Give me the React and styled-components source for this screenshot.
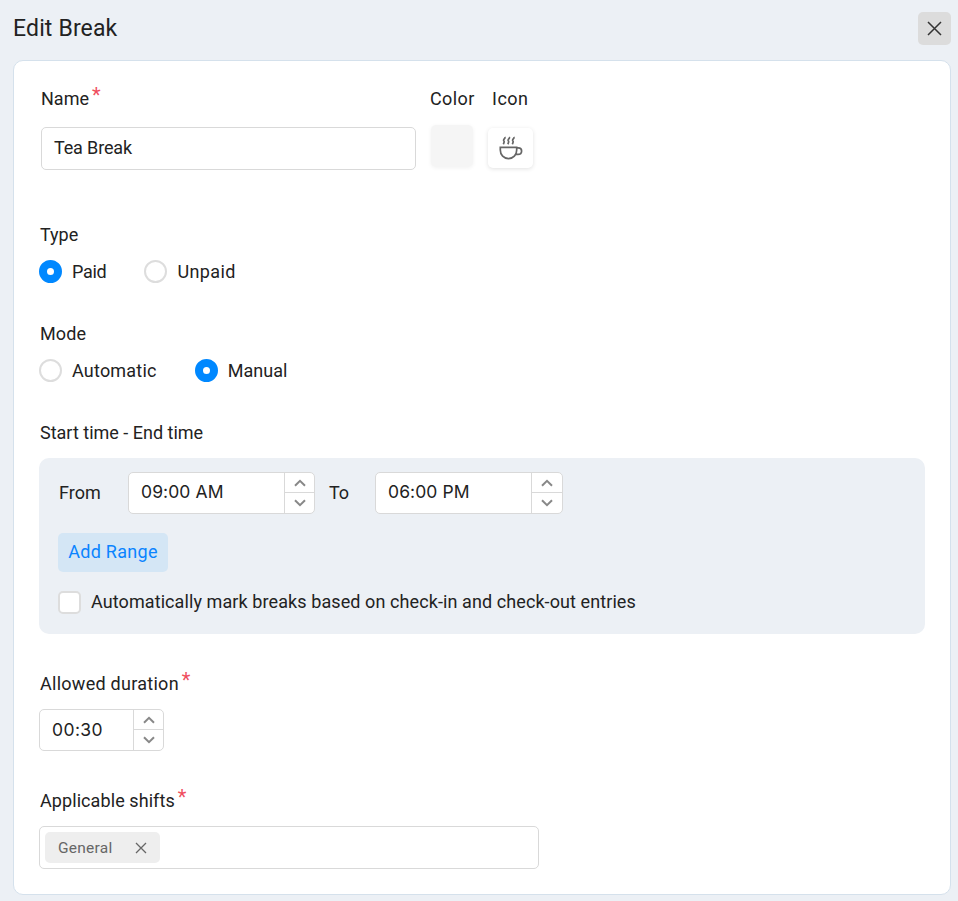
import React from "react";
import styled, { createGlobalStyle } from "styled-components";

const Spinner = ({ value, width, stepWidth = 30, track, top = 7 }) => (
  <SpinnerBox $width={width}>
    <SpinnerValue $track={track} $top={top}>
      {value}
    </SpinnerValue>
    <Steps $width={stepWidth}>
      <Step>
        <Chevron viewBox="0 0 12 8">
          <path d="M1 6.8 6 1.8 11 6.8" />
        </Chevron>
      </Step>
      <Step>
        <Chevron viewBox="0 0 12 8">
          <path d="M1 1.2 6 6.2 11 1.2" />
        </Chevron>
      </Step>
    </Steps>
  </SpinnerBox>
);

const Option = ({ label, checked, track }) => (
  <OptionLabel>
    <Radio $checked={checked} />
    <Text $track={track}>{label}</Text>
  </OptionLabel>
);

const App = () => {
  return (
    <>
      <GlobalStyle />
      <Page>
        <Header>
          <Title>Edit Break</Title>
          <CloseButton aria-label="Close">
            <svg width="15" height="15" viewBox="0 0 15 15">
              <path d="M1 1 14 14M14 1 1 14" />
            </svg>
          </CloseButton>
        </Header>
        <Panel>
          <TopRow>
            <NameField>
              <Label>
                <Text>Name</Text>
                <Required>*</Required>
              </Label>
              <TextBox>Tea Break</TextBox>
            </NameField>
            <ColorField>
              <Label>
                <Text $track={0.4}>Color</Text>
              </Label>
              <Swatch />
            </ColorField>
            <IconField>
              <Label $indent={4}>
                <Text $track={0.5}>Icon</Text>
              </Label>
              <IconTile>
                <svg width="26" height="26" viewBox="0 0 26 26">
                  <path d="M2.3 12.3H18.7V15C18.7 20 15.2 23.6 10.5 23.6S2.3 20 2.3 15Z" />
                  <path d="M18.7 12.9H20.2C22.5 12.9 23.6 14.3 23.6 16S22.4 19.4 20 19.4H17.5" />
                  <path d="M6.7 2C7.8 3.5 5 4.2 5.7 5.5 6.7 6.8 6.2 7.8 5.3 9.2M11.2 2C12.3 3.5 9.5 4.2 10.2 5.5 11.2 6.8 10.7 7.8 9.8 9.2M15.7 2C16.8 3.5 14 4.2 14.7 5.5 15.7 6.8 15.2 7.8 14.3 9.2" />
                </svg>
              </IconTile>
            </IconField>
          </TopRow>

          <Field $top={53}>
            <Label $indent={1}>
              <Text>Type</Text>
            </Label>
            <Options>
              <Option label="Paid" checked track={-0.3} />
              <Option label="Unpaid" track={0.4} />
            </Options>
          </Field>

          <Field $top={39}>
            <Label $indent={1}>
              <Text $track={0.1}>Mode</Text>
            </Label>
            <Options>
              <Option label="Automatic" track={0.2} />
              <Option label="Manual" checked track={0.05} />
            </Options>
          </Field>

          <Field $top={39}>
            <Label $indent={1}>
              <Text>Start time - End time</Text>
            </Label>
            <RangeBox>
              <RangeRow>
                <RangeText $width={70}>From</RangeText>
                <Spinner value="09:00 AM" width={187} track={0.1} />
                <RangeText $width={47} $left={13}>
                  To
                </RangeText>
                <Spinner
                  value="06:00 PM"
                  width={188}
                  stepWidth={31}
                  track={0.1}
                />
              </RangeRow>
              <AddButton>Add Range</AddButton>
              <CheckLabel>
                <Checkbox />
                <Text $track={0.09}>
                  Automatically mark breaks based on check-in and check-out
                  entries
                </Text>
              </CheckLabel>
            </RangeBox>
          </Field>

          <Field $top={38}>
            <Label $indent={1}>
              <Text $track={0.27}>Allowed duration</Text>
              <Required>*</Required>
            </Label>
            <Spinner value="00:30" width={125} track={0.4} top={8} />
          </Field>

          <Field $top={38}>
            <Label $indent={1}>
              <Text $track={0.08}>Applicable shifts</Text>
              <Required>*</Required>
            </Label>
            <SelectBox>
              <Chip>
                General
                <svg width="12" height="12" viewBox="0 0 12 12">
                  <path d="M1 1 11 11M11 1 1 11" />
                </svg>
              </Chip>
            </SelectBox>
          </Field>
        </Panel>
      </Page>
    </>
  );
};

const GlobalStyle = createGlobalStyle`
  * {
    box-sizing: border-box;
  }

  body {
    margin: 0;
    background-color: #ecf0f5;
    color: #222;
    font-family: Roboto, "Liberation Sans", sans-serif;
    font-size: 18px;
    line-height: 24px;
  }

  button {
    border: none;
    font: inherit;
    cursor: pointer;
  }
`;

const Page = styled.div`
  height: 901px;
  padding: 0 7px 6px 13px;
  overflow: hidden;
`;

const Header = styled.div`
  display: flex;
  justify-content: space-between;
  align-items: center;
  height: 60px;
  padding-bottom: 3px;
`;

const Title = styled.h1`
  margin: 0;
  font-size: 23px;
  font-weight: 400;
  line-height: 30px;
  letter-spacing: 0.15px;
`;

const CloseButton = styled.button`
  display: flex;
  justify-content: center;
  align-items: center;
  width: 33px;
  height: 33px;
  padding: 0;
  border-radius: 5px;
  background-color: #dcdcdc;

  svg {
    fill: none;
    stroke: #333;
    stroke-width: 1.5;
  }
`;

const Panel = styled.div`
  height: 835px;
  padding: 26px 25px 0;
  border: 1px solid #d5e1ec;
  border-radius: 10px;
  background-color: #fff;
`;

const TopRow = styled.div`
  display: flex;
  padding-left: 2px;
  height: 83px;
`;

const Field = styled.div`
  display: flex;
  flex-direction: column;
  align-items: flex-start;
  gap: 13px;
  margin-top: ${(props) => props.$top}px;
`;

const NameField = styled.div`
  display: flex;
  flex-direction: column;
  gap: 16px;
  width: 375px;
`;

const ColorField = styled.div`
  width: 47px;
  margin-left: 14px;
`;

const IconField = styled.div`
  margin-left: 11px;
`;

const Label = styled.div`
  display: flex;
  height: 24px;
  padding-left: ${(props) => props.$indent || 0}px;
`;

const Required = styled.span`
  margin: -4px 0 0 3px;
  color: #ef4e5e;
  font-size: 20px;
`;

const Text = styled.span`
  letter-spacing: ${(props) => props.$track || 0}px;
  white-space: nowrap;
`;

const TextBox = styled.div`
  height: 43px;
  padding: 8px 12px;
  border: 1px solid #d9d9d9;
  border-radius: 5px;
  letter-spacing: -0.15px;
`;

const Swatch = styled.div`
  width: 42px;
  height: 42px;
  margin: 14px 0 0 1px;
  border-radius: 5px;
  background-color: #f5f5f5;
  box-shadow: 0 1px 4px rgba(0, 0, 0, 0.06);
`;

const IconTile = styled.div`
  display: flex;
  justify-content: center;
  align-items: center;
  width: 45px;
  height: 40px;
  margin-top: 17px;
  border-radius: 5px;
  background-color: #fff;
  box-shadow: 0 1px 4px rgba(0, 0, 0, 0.12);

  svg {
    fill: none;
    stroke: #666;
    stroke-width: 1.7;
  }
`;

const Options = styled.div`
  display: flex;
  gap: 38px;
`;

const OptionLabel = styled.label`
  display: flex;
  align-items: center;
  gap: 10px;
  height: 23px;
`;

const Radio = styled.span`
  width: 23px;
  height: 23px;
  border: ${(props) => (props.$checked ? "8px solid #0088ff" : "2px solid #ddd")};
  border-radius: 50%;
  background-color: #fff;
`;

const RangeBox = styled.div`
  display: flex;
  flex-direction: column;
  align-items: flex-start;
  width: 886px;
  height: 176px;
  padding: 14px 19px;
  border-radius: 10px;
  background-color: #ecf0f5;
`;

const RangeRow = styled.div`
  display: flex;
  align-items: center;
`;

const RangeText = styled.span`
  width: ${(props) => props.$width}px;
  margin-left: ${(props) => props.$left || 0}px;
  padding-left: 1px;
`;

const SpinnerBox = styled.div`
  display: flex;
  width: ${(props) => props.$width}px;
  height: 42px;
  border: 1px solid #d9d9d9;
  border-radius: 5px;
  background-color: #fff;
`;

const SpinnerValue = styled.div`
  flex: 1;
  padding: ${(props) => props.$top}px 0 0 12px;
  font-family: Inter, Roboto, sans-serif;
  font-size: 17.5px;
  letter-spacing: ${(props) => props.$track}px;
  white-space: nowrap;
`;

const Steps = styled.div`
  width: ${(props) => props.$width}px;
  border-left: 1px solid #d9d9d9;
`;

const Step = styled.div`
  display: flex;
  justify-content: center;
  align-items: center;
  height: 19px;

  & + & {
    height: 20px;
    border-top: 1px solid #d9d9d9;
  }
`;

const Chevron = styled.svg`
  width: 12px;
  height: 8px;
  fill: none;
  stroke: #888;
  stroke-width: 2;
`;

const AddButton = styled.button`
  width: 110px;
  height: 39px;
  margin-top: 19px;
  padding: 0 0 2px;
  border-radius: 5px;
  background-color: #d4e6f5;
  color: #0a84ff;
  letter-spacing: 0.3px;
  white-space: nowrap;
`;

const CheckLabel = styled.label`
  display: flex;
  align-items: center;
  gap: 10px;
  margin-top: 18px;
`;

const Checkbox = styled.span`
  width: 23px;
  height: 23px;
  border: 2px solid #ddd;
  border-radius: 5px;
  background-color: #fff;
`;

const SelectBox = styled.div`
  width: 500px;
  height: 43px;
  padding: 5px;
  border: 1px solid #d9d9d9;
  border-radius: 5px;
`;

const Chip = styled.div`
  display: flex;
  justify-content: space-between;
  align-items: center;
  width: 115px;
  height: 31px;
  padding: 0 13px;
  border-radius: 5px;
  background-color: #eee;
  color: #666;
  font-size: 15.5px;
  letter-spacing: 0.25px;

  svg {
    fill: none;
    stroke: #666;
    stroke-width: 1.3;
  }
`;

export default App;
